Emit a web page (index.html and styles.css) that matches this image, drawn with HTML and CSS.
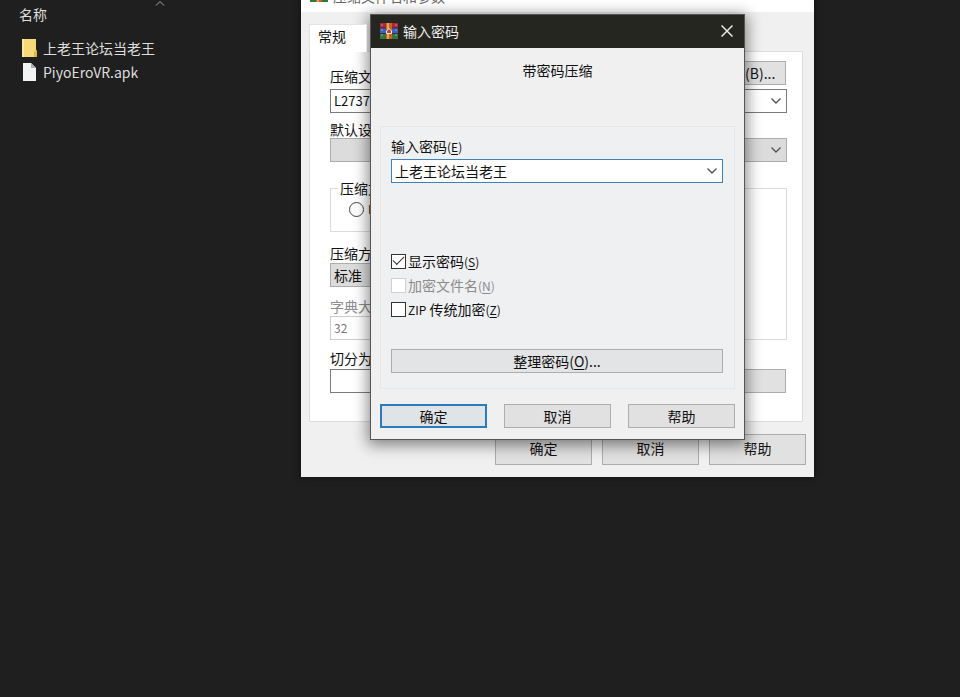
FILE: index.html
```
<!DOCTYPE html>
<html lang="zh-CN">
<head>
<meta charset="utf-8">
<title>输入密码</title>
<link rel="stylesheet" href="styles.css">
</head>
<body>
<svg class="defs" aria-hidden="true">
  <symbol id="rar" viewBox="0 0 18 16">
    <rect x="0" y="0" width="18" height="5" fill="#a8283c"/>
    <rect x="0" y="5" width="18" height="5" fill="#3f5fc4"/>
    <rect x="0" y="10" width="18" height="6" fill="#2c7a3c"/>
    <path d="M0 5h18M0 10.5h18" stroke="#3b2b43" stroke-width="1"/>
    <path d="M2 1v14M16 1v14" stroke="#d58a7a" stroke-width="1" stroke-dasharray="2 3"/>
    <rect x="6" y="0" width="6" height="16" fill="#c8602c"/>
    <path d="M8 0v16" stroke="#eba34c" stroke-width="2"/>
    <path d="M6.500 10.500V8L9 5.500 11.500 8v2.500z" fill="#8b5a42" stroke="#f5e4cf" stroke-width="1"/>
  </symbol>
  <symbol id="chevron" viewBox="0 0 12 8">
    <path d="M1.500 1.500 6 6l4.500-4.500" fill="none" stroke="#555" stroke-width="1.400"/>
  </symbol>
</svg>

<main class="explorer">
  <div class="column-head">名称
    <svg class="sort" viewBox="0 0 10 6"><path d="M1 5.500 5 1.500l4 4" fill="none" stroke="#aaa"/></svg>
  </div>
  <ul class="files">
    <li>
      <svg class="file-icon" viewBox="0 0 15 18"><path d="M0 0h14v11l1 1v6H0z" fill="#f6d978"/><path d="M0 0h2v18H0z" fill="#ffe9a0"/><path d="M12 18v-5l2-2 1 1v6z" fill="#e3b840"/></svg>
      <span>上老王论坛当老王</span>
    </li>
    <li>
      <svg class="file-icon" viewBox="0 0 15 18"><path d="M1 0h8l5 5v13H1z" fill="#f2f4f4"/><path d="M9 0v5h5z" fill="#a9b0b3"/></svg>
      <span>PiyoEroVR.apk</span>
    </li>
  </ul>
</main>

<section class="window archive">
  <header class="archive-title">
    <svg class="app-icon"><use href="#rar"/></svg>
    <h2>压缩文件名和参数</h2>
  </header>
  <div class="archive-body">
    <div class="tabs"><button type="button" class="tab">常规</button></div>
    <div class="panel">
      <div class="row name-row">
        <label for="name">压缩文件名(A)</label>
        <button type="button" class="button browse">浏览(B)...</button>
      </div>
      <div class="combo">
        <input id="name" value="L2737.rar">
        <button type="button" class="drop" aria-label="展开"><svg><use href="#chevron"/></svg></button>
      </div>
      <label class="caption" for="profile">默认设置</label>
      <div class="combo gray">
        <input id="profile">
        <button type="button" class="drop" aria-label="展开"><svg><use href="#chevron"/></svg></button>
      </div>
      <div class="columns">
        <div class="options">
          <fieldset class="format">
            <legend>压缩文件格式</legend>
            <label class="radio"><input type="radio" name="format">RAR</label>
          </fieldset>
          <label class="caption" for="method">压缩方式</label>
          <select id="method" class="field gray"><option>标准</option></select>
          <label class="caption dim" for="dict">字典大小</label>
          <select id="dict" class="field pale" disabled><option>32</option></select>
        </div>
        <fieldset class="settings" aria-label="压缩选项"></fieldset>
      </div>
      <label class="caption" for="split">切分为分卷</label>
      <div class="row split">
        <input id="split" class="field">
        <button type="button" class="button unit" aria-label="单位"></button>
      </div>
    </div>
    <footer class="archive-actions">
      <button type="button" class="button">确定</button>
      <button type="button" class="button">取消</button>
      <button type="button" class="button">帮助</button>
    </footer>
  </div>
</section>

<section class="window dialog" role="dialog" aria-labelledby="dialog-title">
  <header class="dialog-title">
    <svg class="app-icon"><use href="#rar"/></svg>
    <h1 id="dialog-title">输入密码</h1>
    <button type="button" class="close" aria-label="关闭"><svg viewBox="0 0 12 12"><path d="m.5.5 11 11m0-11-11 11" stroke="#e8e8e8" stroke-width="1.500"/></svg></button>
  </header>
  <form class="dialog-body">
    <p class="heading">带密码压缩</p>
    <div class="group">
      <label class="password-label" for="password">输入密码<small>(<u>E</u>)</small></label>
      <div class="combo active">
        <input id="password" value="上老王论坛当老王">
        <button type="button" class="drop" aria-label="展开"><svg><use href="#chevron"/></svg></button>
      </div>
      <div class="checks">
        <label><input type="checkbox" checked><span>显示密码<small>(<u>S</u>)</small></span></label>
        <label class="dim"><input type="checkbox" disabled><span>加密文件名<small>(<u>N</u>)</small></span></label>
        <label><input type="checkbox"><span><small>ZIP</small> 传统加密<small>(<u>Z</u>)</small></span></label>
      </div>
      <button type="button" class="button manage">整理密码(<u>O</u>)...</button>
    </div>
    <footer class="dialog-actions">
      <button type="button" class="button primary">确定</button>
      <button type="button" class="button">取消</button>
      <button type="button" class="button">帮助</button>
    </footer>
  </form>
</section>
</body>
</html>
```
FILE: styles.css
```
* { box-sizing: border-box; }
body {
  margin: 0;
  min-height: 100vh;
  position: relative;
  overflow: hidden;
  background: #1f1f1f;
  color: #111;
  font: 14px/20px "Noto Sans CJK SC", sans-serif;
}
button, input, select { font: inherit; color: inherit; margin: 0; }
h1, h2, p { margin: 0; font-size: 14px; font-weight: 400; }
u { text-underline-offset: 2px; }
small { font-size: 12px; }
.defs { display: none; }
.app-icon { width: 18px; height: 16px; flex: none; }

.explorer { padding: 4px 19px; color: #dedede; }
.column-head { display: flex; width: 146px; justify-content: space-between; }
.sort { width: 10px; height: 6px; margin-top: -4px; }
.files { list-style: none; margin: 12px 0 0; padding: 0 3px; }
.files li { display: flex; align-items: center; gap: 6px; height: 24px; }
.file-icon { width: 15px; height: 18px; }

.window { position: absolute; display: flex; flex-direction: column; }
.button {
  height: 24px;
  padding: 0 8px;
  background: #e1e1e1;
  border: 1px solid #adadad;
  border-radius: 0;
  line-height: 20px;
  white-space: nowrap;
}
.dim { color: #8c8c8c; }

.combo { display: flex; height: 24px; background: #fff; border: 1px solid #7a7a7a; }
.combo input { flex: 1; min-width: 0; border: 0; padding: 0 3px 1px; background: none; outline: 0; }
.drop { width: 20px; padding: 0; border: 0; background: none; display: grid; place-items: center; }
.drop svg { width: 12px; height: 8px; }
.gray { background: #dcdcdc; border-color: #adadad; }

.archive {
  left: 301px;
  top: -19px;
  width: 513px;
  background: #f0f0f0;
  box-shadow: 0 0 6px #0008;
}
.archive-title { display: flex; align-items: flex-start; gap: 5px; height: 31px; padding: 5px 9px 0; background: #fff; }
.archive-title h2 { color: #666; }
.archive-body { padding: 12px 8px; }
.tabs { display: flex; height: 27px; }
.tab { width: 58px; margin-bottom: -1px; padding: 0 8px 6px; text-align: left; background: #fff; border: 1px solid #e3e3e3; border-bottom: 0; z-index: 1; }
.panel { height: 371px; margin-right: 3px; padding: 9px 15px 28px 20px; background: #fff; border: 1px solid #dcdcdc; }
.row { display: flex; justify-content: space-between; }
.name-row { height: 28px; padding-right: 1px; }
.name-row label { padding-top: 5px; }
.browse { width: 78px; text-align: right; padding-right: 14px; }
.name-row + .combo input { font-size: 13px; }
.caption { display: block; height: 20px; }
.combo + .caption { height: 25px; padding-top: 6px; }
.columns { display: flex; justify-content: space-between; gap: 16px; margin-top: 16px; }
.options { width: 210px; }
.format, .settings { margin: 0; border: 1px solid #dcdcdc; }
.format { height: 54px; padding: 0 18px; }
.format legend { height: 20px; margin-left: -11px; padding: 0 2px; }
.radio { display: flex; align-items: center; gap: 4px; height: 22px; font-size: 12px; }
.radio input { appearance: none; width: 15px; height: 15px; border: 1px solid #444; border-radius: 50%; background: #fff; }
.format + .caption { margin-top: 11px; }
.field { display: block; width: 100%; height: 24px; padding: 0 3px; border: 1px solid #7a7a7a; border-radius: 0; background: #fff; appearance: none; }
.field.gray { background: #dcdcdc; border-color: #adadad; }
.pale { border-color: #ccc; color: #777; font-size: 12px; opacity: 1; }
.caption.dim { height: 29px; padding-top: 9px; }
.settings { flex: 1; margin-top: 10px; }
.columns + .caption { height: 29px; padding-top: 8px; }
.split .field { width: 120px; }
.unit { width: 76px; margin-right: 1px; }
.archive-actions { display: flex; justify-content: flex-end; gap: 10px; padding-top: 12px; }
.archive-actions .button { width: 97px; height: 31px; padding-bottom: 3px; }

.dialog {
  left: 370px;
  top: 14px;
  width: 375px;
  border: 1px solid #555;
  background: #f0f0f0;
  box-shadow: 0 3px 14px 2px #0007;
}
.dialog-title { display: flex; align-items: center; gap: 5px; height: 33px; padding: 0 11px 2px 9px; background: #25261f; color: #eee; }
.close { margin-left: auto; width: 12px; height: 12px; padding: 0; border: 0; background: none; }
.close svg { display: block; width: 12px; height: 12px; }
.dialog-body { padding: 12px 9px 11px; }
.heading { text-align: center; }
.group { margin-top: 46px; padding: 9px 11px 15px 10px; border: 1px solid #e6e6e6; background: #eff0f1; }
.password-label { display: block; height: 23px; }
.active { border-color: #3a83bd; }
.checks { display: grid; grid-auto-rows: 24px; margin: 66px 0 28px; }
.checks label { display: flex; align-items: center; gap: 2px; }
.checks input { appearance: none; display: grid; place-items: center; width: 15px; height: 15px; background: #fff; border: 1px solid #333; }
.checks input:disabled { border-color: #d0d0d0; }
.checks input:checked::before { content: ""; width: 10px; height: 5px; margin-bottom: 4px; border: solid #333; border-width: 0 0 1px 1px; transform: rotate(-45deg); }
.manage { display: block; width: 100%; background: #e2e4e6; }
.dialog-actions { display: grid; grid-template-columns: repeat(3, 1fr); gap: 17px; margin-top: 15px; }
.primary { border: 2px solid #2a7cc0; background: #e1e4e7; }
```
